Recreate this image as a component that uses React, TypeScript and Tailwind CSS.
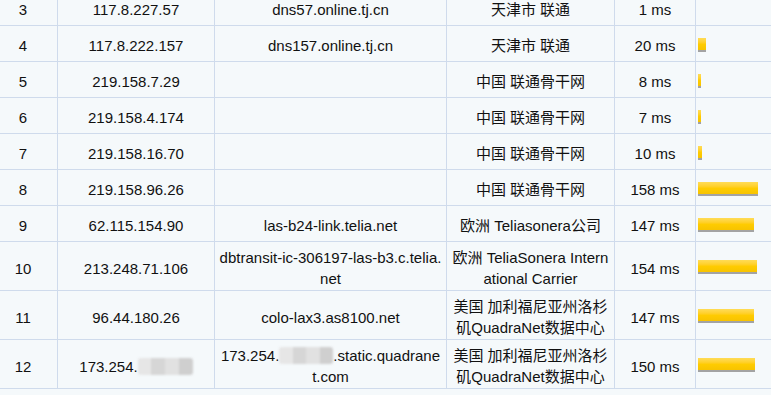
import React from "react";

type Hop = {
  no: number;
  ip: React.ReactNode;
  host: React.ReactNode[];
  place: string[];
  ms: number;
};

// ── Redacted chunk (pixelated gray blur) ──────────────────────────────────────
function Blur({ w }: { w: number }) {
  return (
    <span
      className="inline-flex h-[17px] align-[-3px] overflow-hidden rounded-[3px] blur-[1px]"
      style={{ width: w }}
    >
      <span className="flex-1 bg-[#e6e6e6]" />
      <span className="flex-1 bg-[#d6d6d6]" />
      <span className="flex-1 bg-[#e1e1e1]" />
      <span className="flex-1 bg-[#cfcfcf]" />
    </span>
  );
}

const HOPS: Hop[] = [
  { no: 3, ip: "117.8.227.57", host: ["dns57.online.tj.cn"], place: ["天津市 联通"], ms: 1 },
  { no: 4, ip: "117.8.222.157", host: ["dns157.online.tj.cn"], place: ["天津市 联通"], ms: 20 },
  { no: 5, ip: "219.158.7.29", host: [], place: ["中国 联通骨干网"], ms: 8 },
  { no: 6, ip: "219.158.4.174", host: [], place: ["中国 联通骨干网"], ms: 7 },
  { no: 7, ip: "219.158.16.70", host: [], place: ["中国 联通骨干网"], ms: 10 },
  { no: 8, ip: "219.158.96.26", host: [], place: ["中国 联通骨干网"], ms: 158 },
  { no: 9, ip: "62.115.154.90", host: ["las-b24-link.telia.net"], place: ["欧洲 Teliasonera公司"], ms: 147 },
  {
    no: 10,
    ip: "213.248.71.106",
    host: ["dbtransit-ic-306197-las-b3.c.telia.", "net"],
    place: ["欧洲 TeliaSonera Intern", "ational Carrier"],
    ms: 154,
  },
  {
    no: 11,
    ip: "96.44.180.26",
    host: ["colo-lax3.as8100.net"],
    place: ["美国 加利福尼亚州洛杉", "矶QuadraNet数据中心"],
    ms: 147,
  },
  {
    no: 12,
    ip: (
      <>
        173.254.
        <Blur w={55} />
      </>
    ),
    host: [
      <>
        173.254.
        <Blur w={54} />
        .static.quadrane
      </>,
      "t.com",
    ],
    place: ["美国 加利福尼亚州洛杉", "矶QuadraNet数据中心"],
    ms: 150,
  },
];

const cell =
  "min-h-[36px] pt-[5px] pb-[1px] flex flex-col items-center justify-center text-center border-r border-b border-[#cfdbec]";

export default function App() {
  return (
    <div
      className="w-[771px] h-[395px] overflow-hidden bg-[#f5f9fb] text-[15px] leading-[21px] text-[#111]"
      style={{ fontFamily: '"Liberation Sans", Arial, "Noto Sans CJK SC", sans-serif' }}
    >
      <div className="-mt-[10px] -ml-[11px] grid grid-cols-[69px_157px_232px_168px_81px_80px]">
        {HOPS.map((h) => {
          const bar = Math.round(h.ms * 0.38);
          return (
            <React.Fragment key={h.no}>
              <div className={cell}>{h.no}</div>
              <div className={cell}>
                <div className="whitespace-nowrap">{h.ip}</div>
              </div>
              <div className={cell}>
                {h.host.map((l, i) => (
                  <div key={i} className="whitespace-nowrap">
                    {l}
                  </div>
                ))}
              </div>
              <div className={cell}>
                {h.place.map((l, i) => (
                  <div key={i} className="whitespace-nowrap">
                    {l}
                  </div>
                ))}
              </div>
              <div className={cell}>{h.ms} ms</div>
              {/* latency bar */}
              <div className="min-h-[36px] pl-[2px] flex items-center border-b border-[#cfdbec]">
                {bar > 0 && (
                  <div
                    className="h-[14px] mt-[2px] border-b-2 border-[#a3a3a3] bg-linear-to-b from-[#ffdc55] via-[#ffcc00] to-[#f7c300]"
                    style={{ width: bar }}
                  />
                )}
              </div>
            </React.Fragment>
          );
        })}
      </div>
    </div>
  );
}
